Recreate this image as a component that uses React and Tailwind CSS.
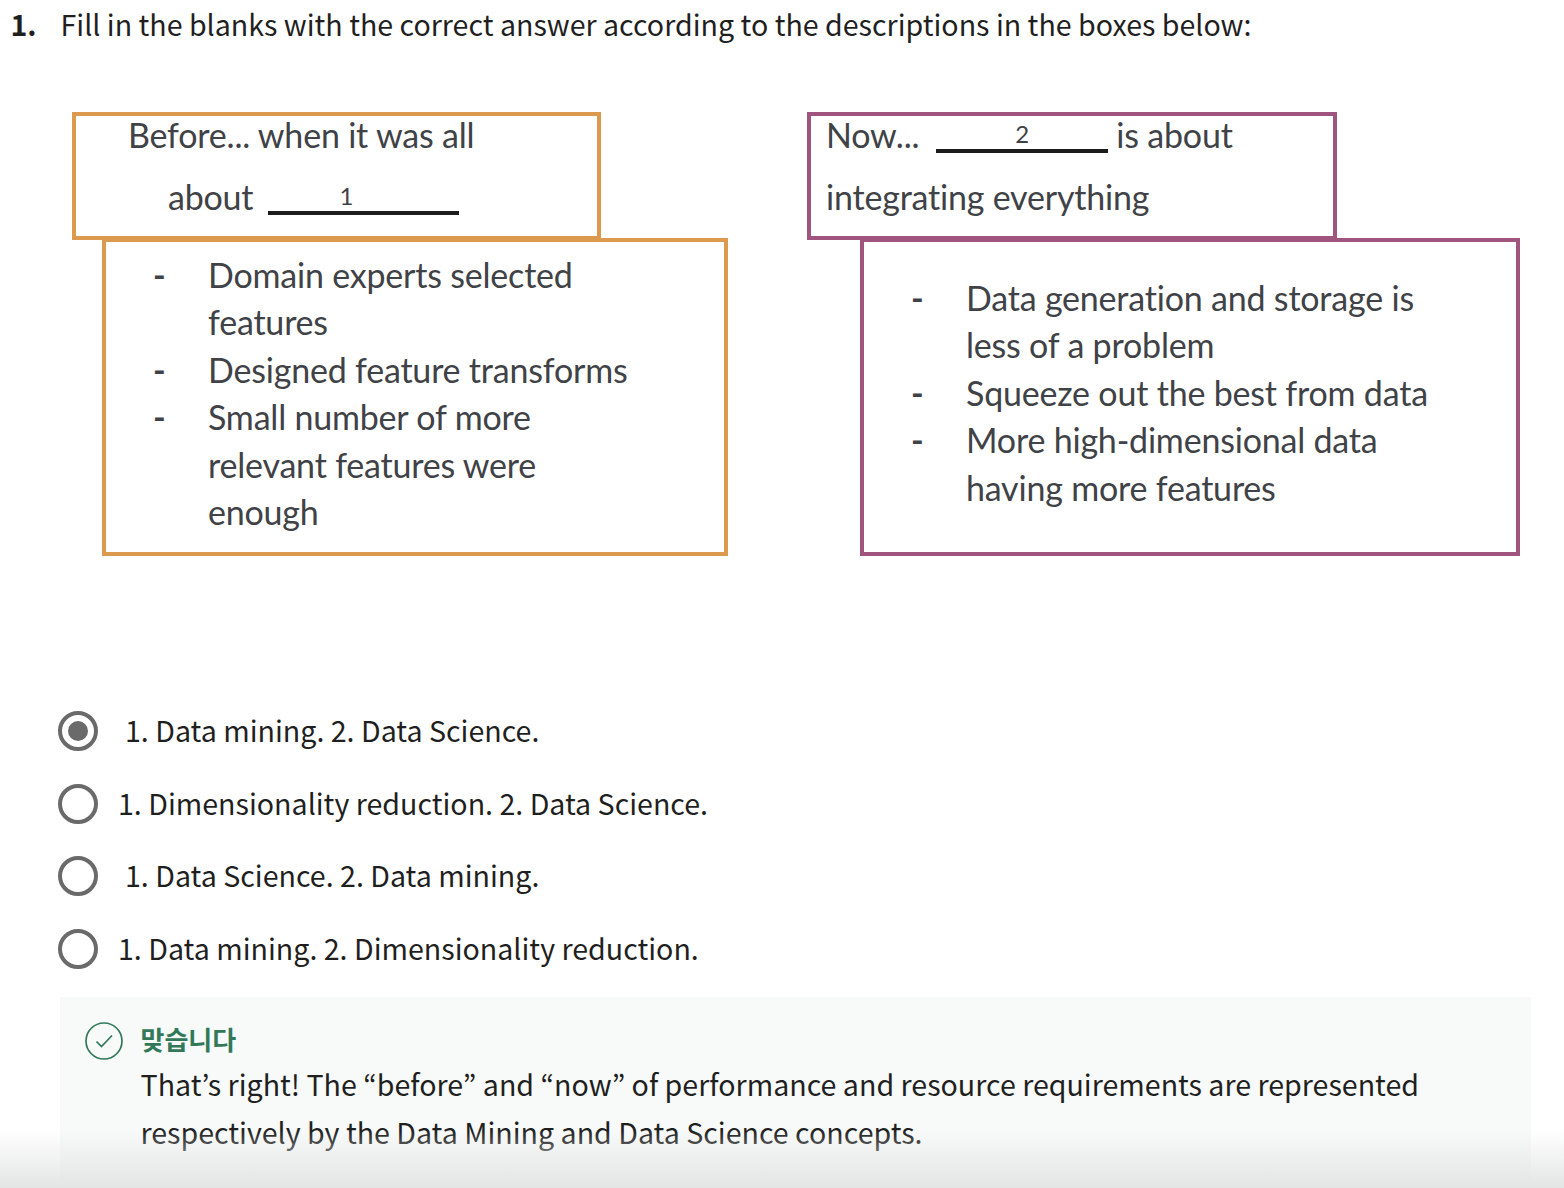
import React from "react";

const sans = "font-['Noto_Sans_CJK_KR','Noto_Sans',sans-serif]";
const img = "font-['Lato','Noto_Sans',sans-serif] text-[34px] leading-[47.4px] tracking-[-0.2px] text-[#3f4246]";

function Bullet({ children, first }) {
  return (
    <div className="flex">
      <span className="w-[55px] shrink-0 font-bold">{first ? "-" : ""}</span>
      <span>{children}</span>
    </div>
  );
}

function Radio({ checked, ml, children }) {
  return (
    <div className="flex items-center h-[40px] mb-[32.6px]">
      <span className="w-[40px] h-[40px] rounded-full border-[4px] border-[#6a6a6a] flex items-center justify-center shrink-0">
        {checked && <span className="w-[20px] h-[20px] rounded-full bg-[#6a6a6a]" />}
      </span>
      <span className={`${ml} -translate-y-[1px]`}>{children}</span>
    </div>
  );
}

export default function App() {
  return (
    <div className={`relative w-[1564px] h-[1188px] overflow-hidden bg-white text-[#1f1f1f] ${sans} text-[28.6px] leading-[48px]`}>
      <div className="flex h-[112px] items-start">
        <span className="w-[60.5px] pl-[10.5px] font-bold shrink-0">1.</span>
        <span>Fill in the blanks with the correct answer according to the descriptions in the boxes below:</span>
      </div>

      <div className={`flex ${img}`}>
        <div className="ml-[72px] w-[656px] shrink-0">
          <div className="w-[529px] h-[128px] border-[4px] border-[#dd9a4f] relative z-10 -mb-[2px] pl-[52px]">
            <div className="h-[41px] leading-[37px]">Before... when it was all</div>
            <div className="mt-[21px] ml-[40px] flex h-[41px] leading-[37px]">
              <span>about</span>
              <span className="ml-[15px] w-[191px] h-[37px] border-b-[4px] border-[#1c1c1c] text-center text-[24px] leading-[35px] pr-[35px] tracking-normal">1</span>
            </div>
          </div>
          <div className="ml-[30px] w-[626px] h-[318px] border-[4px] border-[#dd9a4f] pl-[47px] pt-[9px]">
            <Bullet first>Domain experts selected<br />features</Bullet>
            <Bullet first>Designed feature transforms</Bullet>
            <Bullet first>Small number of more<br />relevant features were<br />enough</Bullet>
          </div>
        </div>
        <div className="ml-[79px] w-[713px] shrink-0">
          <div className="w-[530px] h-[128px] border-[4px] border-[#a0557f] relative z-10 -mb-[2px] pl-[15px]">
            <div className="flex h-[41px] leading-[37px]">
              <span>Now...</span>
              <span className="ml-[17px] w-[172px] h-[37px] border-b-[4px] border-[#1c1c1c] text-center text-[24px] leading-[35px] tracking-normal">2</span>
              <span className="ml-[8px]">is about</span>
            </div>
            <div className="mt-[21px] h-[41px] leading-[37px]">integrating everything</div>
          </div>
          <div className="ml-[53px] w-[660px] h-[318px] border-[4px] border-[#a0557f] pl-[47px] pt-[32px]">
            <Bullet first>Data generation and storage is<br />less of a problem</Bullet>
            <Bullet first>Squeeze out the best from data</Bullet>
            <Bullet first>More high-dimensional data<br />having more features</Bullet>
          </div>
        </div>
      </div>

      <div className="ml-[58px] mt-[155px]">
        <Radio checked ml="ml-[27px]">1. Data mining. 2. Data Science.</Radio>
        <Radio ml="ml-[20px]">1. Dimensionality reduction. 2. Data Science.</Radio>
        <Radio ml="ml-[27px]">1. Data Science. 2. Data mining.</Radio>
        <Radio ml="ml-[20px]">1. Data mining. 2. Dimensionality reduction.</Radio>
      </div>

      <div className="absolute left-[60px] top-[997px] w-[1471px] h-[184px] bg-[#f8faf9] flex pl-[25px] pt-[25px]">
        <svg width="38" height="38" viewBox="0 0 38 38" fill="none" className="shrink-0">
          <circle cx="19" cy="19" r="18" stroke="#32795a" strokeWidth="1.7" />
          <path d="M11.5 19.5 L16.5 24.5 L27 13.5" stroke="#32795a" strokeWidth="1.7" />
        </svg>
        <div className="ml-[17.5px] -mt-[6px]">
          <div className="text-[#32795a] font-bold text-[26px] leading-[46px] h-[44px]">맞습니다</div>
          <div className="w-[1330px]">That’s right! The “before” and “now” of performance and resource requirements are represented respectively by the Data Mining and Data Science concepts.</div>
        </div>
      </div>

      <div className="absolute left-0 right-0 bottom-0 h-[58px] bg-gradient-to-b from-transparent to-[#e3e5e5]" />
    </div>
  );
}
